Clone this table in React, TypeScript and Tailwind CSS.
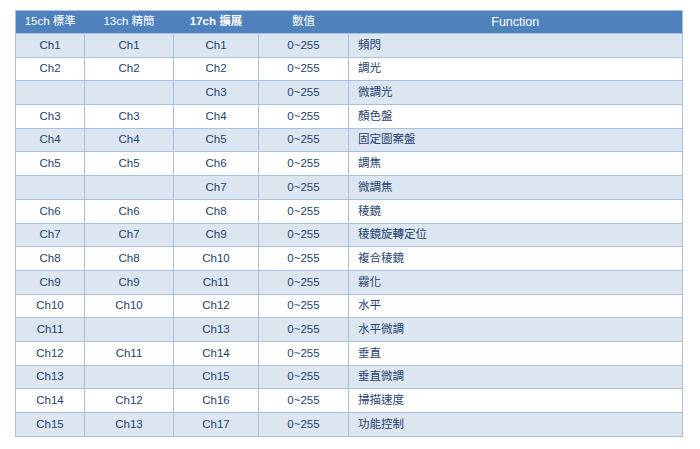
const rows: [string, string, string, string][] = [
  ['Ch1', 'Ch1', 'Ch1', '頻閃'],
  ['Ch2', 'Ch2', 'Ch2', '調光'],
  ['', '', 'Ch3', '微調光'],
  ['Ch3', 'Ch3', 'Ch4', '顏色盤'],
  ['Ch4', 'Ch4', 'Ch5', '固定圖案盤'],
  ['Ch5', 'Ch5', 'Ch6', '調焦'],
  ['', '', 'Ch7', '微調焦'],
  ['Ch6', 'Ch6', 'Ch8', '稜鏡'],
  ['Ch7', 'Ch7', 'Ch9', '稜鏡旋轉定位'],
  ['Ch8', 'Ch8', 'Ch10', '複合稜鏡'],
  ['Ch9', 'Ch9', 'Ch11', '霧化'],
  ['Ch10', 'Ch10', 'Ch12', '水平'],
  ['Ch11', '', 'Ch13', '水平微調'],
  ['Ch12', 'Ch11', 'Ch14', '垂直'],
  ['Ch13', '', 'Ch15', '垂直微調'],
  ['Ch14', 'Ch12', 'Ch16', '掃描速度'],
  ['Ch15', 'Ch13', 'Ch17', '功能控制'],
];

export default function App() {
  return (
    <div
      className="w-[700px] h-[449px] bg-white pt-[10px] pl-[15px]"
      style={{ fontFamily: '"Liberation Sans", "Noto Sans CJK TC", sans-serif' }}
    >
      <table className="border-collapse table-fixed w-[668px] text-[11.5px] text-[#1f3f6e]">
        <colgroup>
          <col className="w-[69px]" />
          <col className="w-[89px]" />
          <col className="w-[85px]" />
          <col className="w-[90px]" />
          <col />
        </colgroup>
        <thead>
          <tr className="h-[23px] bg-[#4f81bd] text-white border border-[#a9c1e0]">
            <th className="font-normal">15ch 標準</th>
            <th className="font-normal">13ch 精簡</th>
            <th className="font-bold">17ch 擴展</th>
            <th className="font-normal">數值</th>
            <th className="font-normal text-[12.5px]">Function</th>
          </tr>
        </thead>
        <tbody>
          {rows.map((r, i) => (
            <tr key={i} className={i % 2 === 0 ? 'h-[23.7px] bg-[#dce6f1]' : 'h-[23.7px] bg-white'}>
              <td className="border border-[#a9c1e0] text-center p-0">{r[0]}</td>
              <td className="border border-[#a9c1e0] text-center p-0">{r[1]}</td>
              <td className="border border-[#a9c1e0] text-center p-0">{r[2]}</td>
              <td className="border border-[#a9c1e0] text-center p-0">0~255</td>
              <td className="border border-[#a9c1e0] text-left pl-[9px]">{r[3]}</td>
            </tr>
          ))}
        </tbody>
      </table>
    </div>
  );
}
